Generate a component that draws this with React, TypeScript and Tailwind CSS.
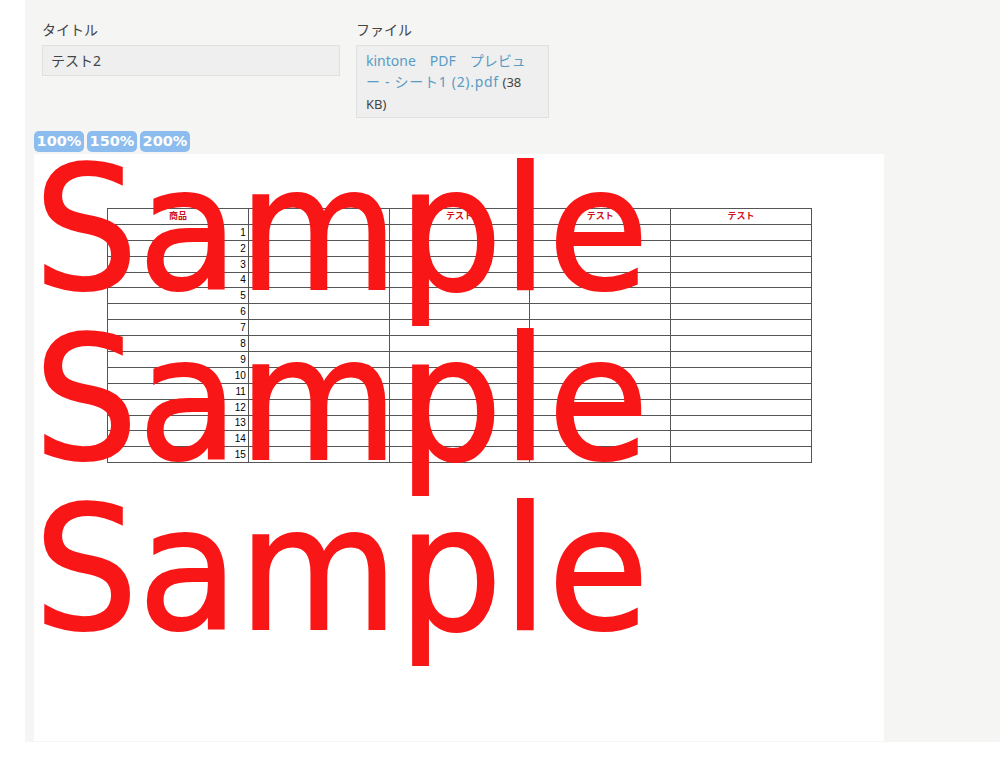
const rowNumbers = Array.from({ length: 15 }, (_, i) => i + 1);
const headers = ["商品", "単価", "テスト", "テスト", "テスト"];

function Field({ label, className, children }: { label: string; className: string; children: React.ReactNode }) {
  return (
    <div className={className}>
      <p className="text-sm leading-[20px] text-[#444]">{label}</p>
      <div className="mt-[5px] border border-[#e0e0e0] bg-[#efefef] text-sm text-[#444]">{children}</div>
    </div>
  );
}

function PreviewTable() {
  return (
    <table className="w-[705px] table-fixed border-collapse border border-[#555]">
      <thead>
        <tr className="h-[15.9px]">
          {headers.map((h, i) => (
            <th key={i} className="border border-[#555] p-0 text-center text-[9px] leading-[14px] font-bold text-[#d0101c]">
              {h}
            </th>
          ))}
        </tr>
      </thead>
      <tbody>
        {rowNumbers.map((n) => (
          <tr key={n} className="h-[15.9px]">
            <td className="border border-[#555] p-0 pr-[2px] text-right align-bottom font-['Liberation_Sans',sans-serif] text-[10px] leading-[14px] text-black">{n}</td>
            <td className="border border-[#555] p-0"></td>
            <td className="border border-[#555] p-0"></td>
            <td className="border border-[#555] p-0"></td>
            <td className="border border-[#555] p-0"></td>
          </tr>
        ))}
      </tbody>
    </table>
  );
}

export default function App() {
  return (
    <div className="h-[767px] overflow-hidden bg-white pl-[25px] font-['Noto_Sans','Noto_Sans_CJK_JP',sans-serif]">
      <div className="h-[742px] bg-[#f5f5f4] pt-[20px]">
        <div className="flex items-start pl-[17px]">
          <Field label="タイトル" className="w-[298px]">
            <div className="h-[29px] px-2 leading-[29px]">テスト2</div>
          </Field>
          <Field label="ファイル" className="ml-[16px] w-[193px]">
            <div className="h-[71px] pt-[4px] pl-[9px] leading-[21px] whitespace-nowrap">
              <a className="text-[#5a9cc5]">
                kintone　PDF　プレビュ
                <br />
                <span className="tracking-[0.7px]">ー - シート1 (2).pdf</span>
              </a>{" "}
              <span className="text-[13px]">
                (38
                <br />
                KB)
              </span>
            </div>
          </Field>
        </div>

        <div className="mt-[13px] flex gap-[3px] pl-[9px]">
          {["100%", "150%", "200%"].map((z) => (
            <button
              key={z}
              className="flex h-[21px] w-[50px] items-center justify-center rounded-[5px] bg-[#8dbcee] font-['DejaVu_Sans',sans-serif] text-[14.5px] font-bold text-white"
            >
              {z}
            </button>
          ))}
        </div>

        <div className="relative mt-[2px] ml-[9px] h-[587px] w-[850px] overflow-hidden bg-white">
          <div className="pt-[54px] pl-[73px]">
            <PreviewTable />
          </div>
          {/* watermark sits over the sheet */}
          <div className="absolute top-[-8px] left-0 font-['DejaVu_Sans',sans-serif] text-[164px] leading-[170px] text-[#f91616] [-webkit-text-stroke:2px_#f91616]">
            <p className="scale-y-[1.04]">Sample</p>
            <p className="scale-y-[1.04]">Sample</p>
            <p className="scale-y-[1.04]">Sample</p>
          </div>
        </div>
      </div>
    </div>
  );
}
